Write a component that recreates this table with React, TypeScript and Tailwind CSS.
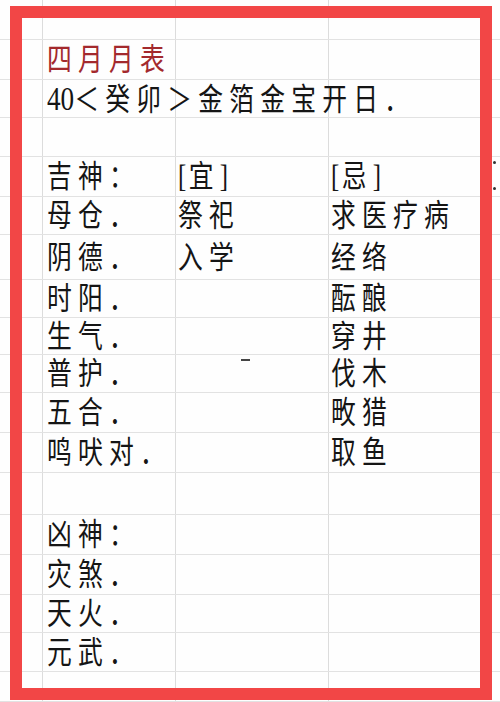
import React from "react";

type Row = {
  h: string;
  b?: React.ReactNode;
  c?: React.ReactNode;
  d?: React.ReactNode;
  extra?: React.ReactNode;
};

const Txt = ({ children, className = "" }: { children: React.ReactNode; className?: string }) => (
  <span
    className={`inline-block origin-left scale-x-80 text-[31px] leading-none tracking-[7.75px] whitespace-nowrap ${className}`}
  >
    {children}
  </span>
);

const Bracket = ({ ch }: { ch: string }) => (
  <Txt>
    <span className="tracking-[3px]">[</span>
    {ch}
    <span className="tracking-normal">]</span>
  </Txt>
);

const rows: Row[] = [
  { h: "h-[40px]" },
  { h: "h-[40px]", b: <Txt className="text-[#a3292d]">四月月表</Txt> },
  {
    h: "h-[38px]",
    b: (
      <Txt>
        <span className="tracking-normal text-[34px]">40</span>＜癸卯＞金箔金宝开日．
      </Txt>
    ),
  },
  { h: "h-[39px]" },
  {
    h: "h-[40px]",
    b: <Txt>吉神：</Txt>,
    c: <Bracket ch="宜" />,
    d: <Bracket ch="忌" />,
    extra: (
      <>
        <span className="absolute left-[164px] top-[4px] w-[3px] h-[3px] rounded-full bg-[#333]" />
        <span className="absolute left-[164px] top-[30px] w-[3px] h-[3px] rounded-full bg-[#333]" />
      </>
    ),
  },
  { h: "h-[38px]", b: <Txt>母仓．</Txt>, c: <Txt>祭祀</Txt>, d: <Txt>求医疗病</Txt> },
  { h: "h-[45px]", b: <Txt>阴德．</Txt>, c: <Txt>入学</Txt>, d: <Txt>经络</Txt> },
  { h: "h-[38px]", b: <Txt>时阳．</Txt>, d: <Txt>酝酿</Txt> },
  { h: "h-[37px]", b: <Txt>生气．</Txt>, d: <Txt>穿井</Txt> },
  { h: "h-[38px]", b: <Txt>普护．</Txt>, d: <Txt>伐木</Txt> },
  { h: "h-[40px]", b: <Txt>五合．</Txt>, d: <Txt>畋猎</Txt> },
  { h: "h-[40px]", b: <Txt>鸣吠对．</Txt>, d: <Txt>取鱼</Txt> },
  { h: "h-[42px]" },
  { h: "h-[40px]", b: <Txt>凶神：</Txt> },
  { h: "h-[40px]", b: <Txt>灾煞．</Txt> },
  { h: "h-[38px]", b: <Txt>天火．</Txt> },
  { h: "h-[39px]", b: <Txt>元武．</Txt> },
  { h: "h-[30px]" },
];

export default function App() {
  return (
    <div className="relative w-[500px] h-[702px] overflow-hidden bg-[#fefefe] text-[#151515] font-['Liberation_Serif','Noto_Sans_CJK_SC',serif]">
      {rows.map((r, i) => (
        <div key={i} className={`flex ${r.h} border-b border-[#e2e2e2]`}>
          <div className="w-[43px] shrink-0 border-r border-[#dcdcdc]" />
          <div className="w-[133px] shrink-0 flex items-center pl-[4px] border-r border-[#dcdcdc]">{r.b}</div>
          <div className="w-[153px] shrink-0 flex items-center pl-[2px] border-r border-[#dcdcdc]">{r.c}</div>
          <div className="relative flex-1 flex items-center pl-[2px]">
            {r.d}
            {r.extra}
          </div>
        </div>
      ))}

      {/* small stray mark in the middle of the sheet */}
      <div className="absolute left-[241px] top-[359px] w-[9px] h-[2px] bg-[#444]" />

      {/* red frame drawn over the sheet */}
      <div className="pointer-events-none absolute left-[10px] top-[6px] w-[482px] h-[694px] border-[12px] border-[#f24646]" />
    </div>
  );
}
